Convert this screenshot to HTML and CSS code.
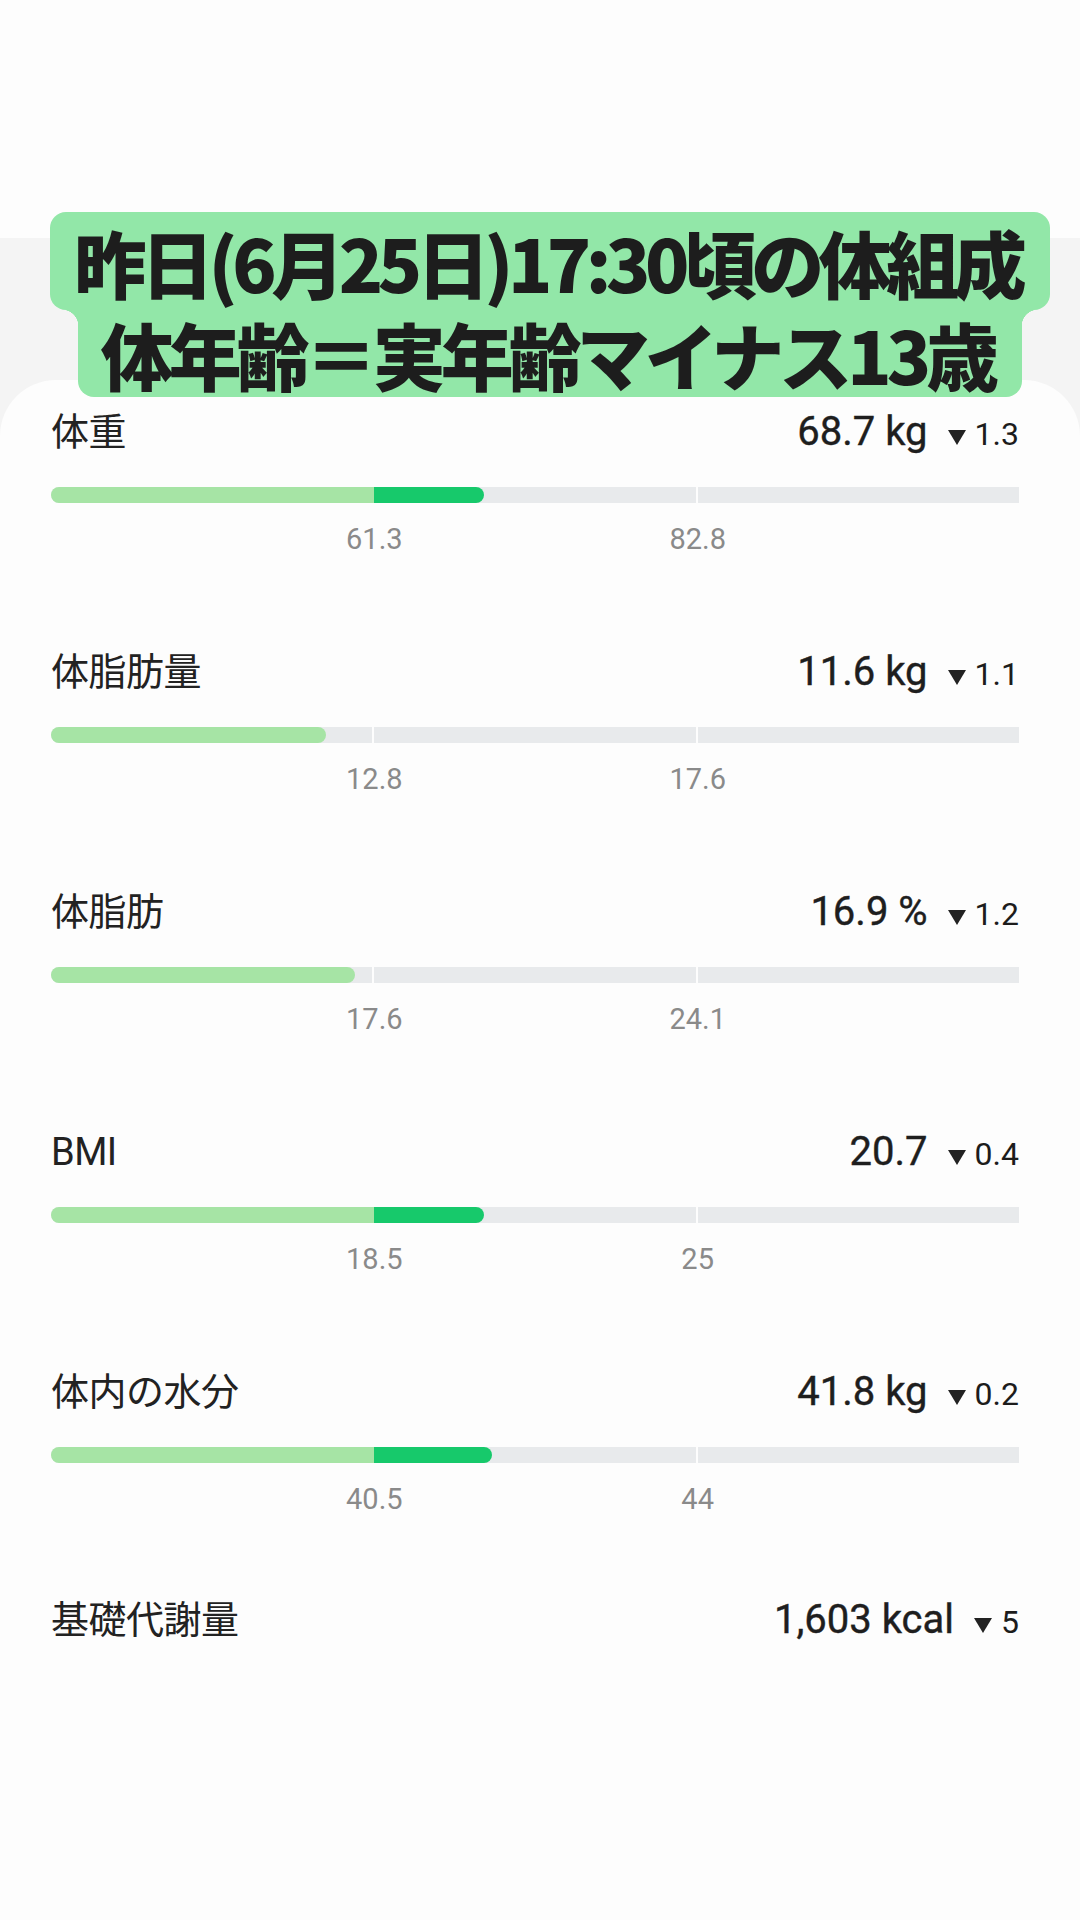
FILE: index.html
```html
<!DOCTYPE html>
<html lang="ja">
<head>
  <meta charset="UTF-8" />
  <meta name="viewport" content="width=device-width, initial-scale=1.0" />
  <title>体組成</title>
  <link rel="stylesheet" href="styles.css">
</head>
<body>
  <div class="top-space"></div>

  <div class="sheet">
    <section class="card">
      <div class="metric">
        <div class="metric-head">
          <span class="metric-name">体重</span>
          <span class="metric-value"><span class="num">68.7 kg</span><span class="delta"><svg class="tri" viewBox="0 0 18 15"><path d="M0 0H18L9 15Z"/></svg>1.3</span></span>
        </div>
        <div class="bar">
          <span class="seg"></span><span class="seg"></span><span class="seg"></span>
          <span class="fill fill-over" style="width: 433px"></span>
        </div>
        <div class="ticks"><span></span><span>61.3</span><span>82.8</span></div>
      </div>

      <div class="metric">
        <div class="metric-head">
          <span class="metric-name">体脂肪量</span>
          <span class="metric-value"><span class="num">11.6 kg</span><span class="delta"><svg class="tri" viewBox="0 0 18 15"><path d="M0 0H18L9 15Z"/></svg>1.1</span></span>
        </div>
        <div class="bar">
          <span class="seg"></span><span class="seg"></span><span class="seg"></span>
          <span class="fill" style="width: 275px"></span>
        </div>
        <div class="ticks"><span></span><span>12.8</span><span>17.6</span></div>
      </div>

      <div class="metric">
        <div class="metric-head">
          <span class="metric-name">体脂肪</span>
          <span class="metric-value"><span class="num">16.9 %</span><span class="delta"><svg class="tri" viewBox="0 0 18 15"><path d="M0 0H18L9 15Z"/></svg>1.2</span></span>
        </div>
        <div class="bar">
          <span class="seg"></span><span class="seg"></span><span class="seg"></span>
          <span class="fill" style="width: 304px"></span>
        </div>
        <div class="ticks"><span></span><span>17.6</span><span>24.1</span></div>
      </div>

      <div class="metric">
        <div class="metric-head">
          <span class="metric-name">BMI</span>
          <span class="metric-value"><span class="num">20.7</span><span class="delta"><svg class="tri" viewBox="0 0 18 15"><path d="M0 0H18L9 15Z"/></svg>0.4</span></span>
        </div>
        <div class="bar">
          <span class="seg"></span><span class="seg"></span><span class="seg"></span>
          <span class="fill fill-over" style="width: 433px"></span>
        </div>
        <div class="ticks"><span></span><span>18.5</span><span>25</span></div>
      </div>

      <div class="metric metric-tight">
        <div class="metric-head">
          <span class="metric-name">体内の水分</span>
          <span class="metric-value"><span class="num">41.8 kg</span><span class="delta"><svg class="tri" viewBox="0 0 18 15"><path d="M0 0H18L9 15Z"/></svg>0.2</span></span>
        </div>
        <div class="bar">
          <span class="seg"></span><span class="seg"></span><span class="seg"></span>
          <span class="fill fill-over" style="width: 441px"></span>
        </div>
        <div class="ticks"><span></span><span>40.5</span><span>44</span></div>
      </div>

      <div class="metric">
        <div class="metric-head">
          <span class="metric-name">基礎代謝量</span>
          <span class="metric-value"><span class="num">1,603 kcal</span><span class="delta"><svg class="tri" viewBox="0 0 18 15"><path d="M0 0H18L9 15Z"/></svg>5</span></span>
        </div>
      </div>
    </section>
  </div>

  <!-- caption laid over the screen -->
  <div class="caption">
    <div class="caption-line first">昨日(6月25日)17:30頃の体組成</div>
    <div class="caption-line second">体年齢＝実年齢マイナス13歳</div>
  </div>
</body>
</html>
```

FILE: styles.css
```css
:root {
  --page: #fdfdfd;
  --band: #f4f4f4;
  --text: #222222;
  --muted: #8a8a8a;
  --track: #e8eaec;
  --green-light: #a6e4a5;
  --green-dark: #17c96b;
  --caption: #92e7a8;
}

body {
  margin: 0;
  padding: 0;
  background-color: var(--page);
  color: var(--text);
  font-family: Roboto, "Noto Sans CJK JP", sans-serif;
  height: 1920px;
  overflow: hidden;
  position: relative;
}

.top-space {
  height: 238px;
}

.sheet {
  background-color: var(--band);
  padding-top: 142px;
}

.card {
  background-color: var(--page);
  border-radius: 56px 56px 0 0;
  min-height: 1540px;
  padding: 28px 61px 0 51px;
  box-sizing: border-box;
}

.metric {
  margin-bottom: 93px;
}

.metric-tight {
  margin-bottom: 81px;
}

.metric-head {
  display: flex;
  justify-content: space-between;
  align-items: baseline;
  height: 48px;
  line-height: 48px;
}

.metric-name {
  font-size: 38px;
  letter-spacing: -0.5px;
}

.metric-value {
  display: flex;
  align-items: baseline;
  white-space: nowrap;
}

.num {
  font-size: 40px;
  font-weight: 400;
  color: #1e1e1e;
  -webkit-text-stroke: 0.4px #1e1e1e;
}

.delta {
  display: inline-flex;
  align-items: baseline;
  font-size: 32px;
  margin-left: 20px;
  color: #1c1c1c;
}

.tri {
  width: 18px;
  height: 15px;
  margin-right: 9px;
  fill: #222;
}

.bar {
  position: relative;
  display: grid;
  grid-template-columns: 1fr 1fr 1fr;
  gap: 2px;
  height: 16px;
  margin-top: 31px;
}

.seg {
  background-color: var(--track);
}

.seg:first-child {
  border-radius: 8px 0 0 8px;
}

.seg:last-child {
  border-radius: 0 8px 8px 0;
}

.fill {
  position: absolute;
  left: 0;
  top: 0;
  bottom: 0;
  border-radius: 8px;
  background-color: var(--green-light);
}

.fill-over {
  background: linear-gradient(90deg, var(--green-light) 323px, var(--green-dark) 323px);
}

.ticks {
  display: grid;
  grid-template-columns: 1fr 1fr 1fr;
  gap: 2px;
  margin-top: 20px;
  font-size: 29px;
  line-height: 32px;
  color: var(--muted);
}

.ticks span {
  justify-self: start;
  transform: translateX(-50%);
}

.caption {
  position: absolute;
  top: 212px;
  left: 20px;
  right: 0;
  display: flex;
  flex-direction: column;
  align-items: center;
  font-family: "Noto Sans CJK JP", sans-serif;
  font-weight: 900;
  color: #1d1d1d;
}

.caption-line {
  background-color: var(--caption);
  white-space: nowrap;
  font-size: 73px;
}

.caption-line.first {
  line-height: 98px;
  letter-spacing: -5.5px;
  padding: 0 29px 0 24px;
  border-radius: 16px;
}

.caption-line.second {
  position: relative;
  line-height: 87px;
  letter-spacing: -5px;
  padding: 0 28px 0 23px;
  border-radius: 0 0 16px 16px;
}

.caption-line.second::before,
.caption-line.second::after {
  content: "";
  position: absolute;
  top: 0;
  width: 16px;
  height: 16px;
}

.caption-line.second::before {
  left: -16px;
  background: radial-gradient(circle at 0 100%, transparent 16px, var(--caption) 16.5px);
}

.caption-line.second::after {
  right: -16px;
  background: radial-gradient(circle at 100% 100%, transparent 16px, var(--caption) 16.5px);
}
```
